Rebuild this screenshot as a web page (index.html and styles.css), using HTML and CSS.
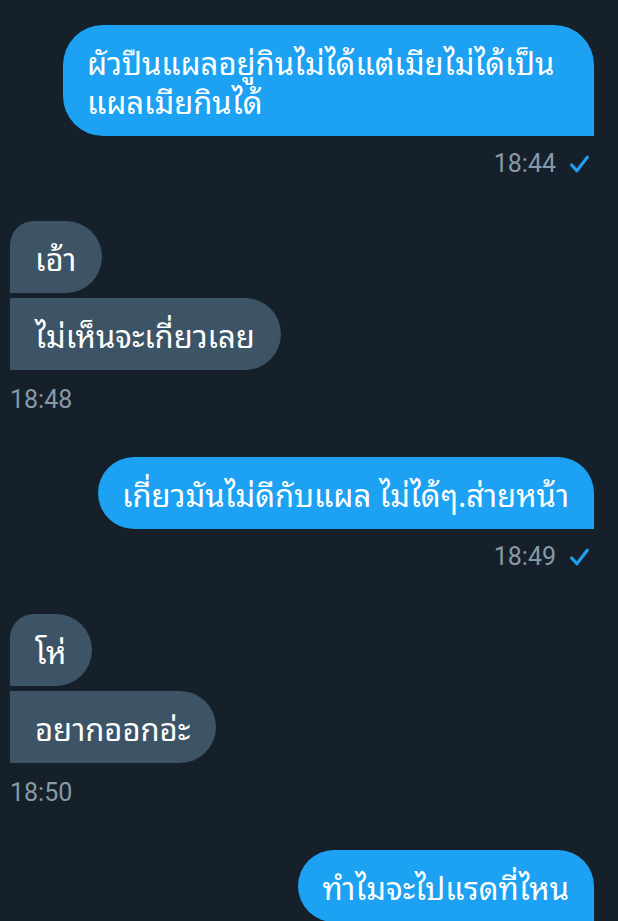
FILE: index.html
```html
<!DOCTYPE html>
<html lang="th">
<head>
<meta charset="utf-8">
<link rel="stylesheet" href="styles.css">
</head>
<body>
<main class="chat">
  <section class="group sent">
    <div class="bubble">ผัวปืนแผลอยู่กินไม่ได้แต่เมียไม่ได้เป็นแผลเมียกินได้</div>
    <div class="meta"><span class="time">18:44</span><svg class="check" viewBox="0 0 20 20"><path d="M2.5 10.5 L7.5 16 L17.5 3"/></svg></div>
  </section>
  <section class="group received">
    <div class="bubble first">เอ้า</div>
    <div class="bubble last">ไม่เห็นจะเกี่ยวเลย</div>
    <div class="meta"><span class="time">18:48</span></div>
  </section>
  <section class="group sent">
    <div class="bubble">เกี่ยวมันไม่ดีกับแผล ไม่ได้ๆ.ส่ายหน้า</div>
    <div class="meta"><span class="time">18:49</span><svg class="check" viewBox="0 0 20 20"><path d="M2.5 10.5 L7.5 16 L17.5 3"/></svg></div>
  </section>
  <section class="group received">
    <div class="bubble first">โห่</div>
    <div class="bubble last">อยากออกอ่ะ</div>
    <div class="meta"><span class="time">18:50</span></div>
  </section>
  <section class="group sent">
    <div class="bubble">ทำไมจะไปแรดที่ไหน</div>
  </section>
</main>
</body>
</html>
```
FILE: styles.css
```css
html, body {
  margin: 0;
  padding: 0;
  background: #15202b;
  height: 100%;
  overflow: hidden;
}
body {
  font-family: "Noto Sans Thai Looped", "Noto Sans Thai", Roboto, sans-serif;
  color: #ffffff;
}
.chat {
  display: flex;
  flex-direction: column;
  gap: 43px;
  padding: 25px 24px 0 10px;
}
.group {
  display: flex;
  flex-direction: column;
  gap: 5px;
}
.sent { align-items: flex-end; }
.received { align-items: flex-start; }
.bubble {
  font-size: 31px;
  line-height: 39px;
  padding: 17px 25px 16px 24px;
  max-width: 482px;
}
.sent .bubble {
  background: #1da1f2;
  border-radius: 40px 40px 0 40px;
}
.received .bubble {
  background: #3d5466;
  padding-left: 25px;
  padding-right: 26px;
}
.received .first { border-radius: 24px 36px 36px 0; }
.received .last { border-radius: 0 36px 36px 0; }
.meta {
  display: flex;
  align-items: center;
  gap: 13px;
  margin-top: 9px;
  height: 28px;
}
.received .meta { margin-top: 11px; }
.sent .meta { padding-right: 4px; }
.time {
  font-family: Roboto, sans-serif;
  font-size: 25px;
  line-height: 28px;
  color: #8899a6;
}
.check {
  width: 21px;
  height: 21px;
  fill: none;
  stroke: #1da1f2;
  stroke-width: 3;
  stroke-linecap: round;
  stroke-linejoin: round;
}
```
